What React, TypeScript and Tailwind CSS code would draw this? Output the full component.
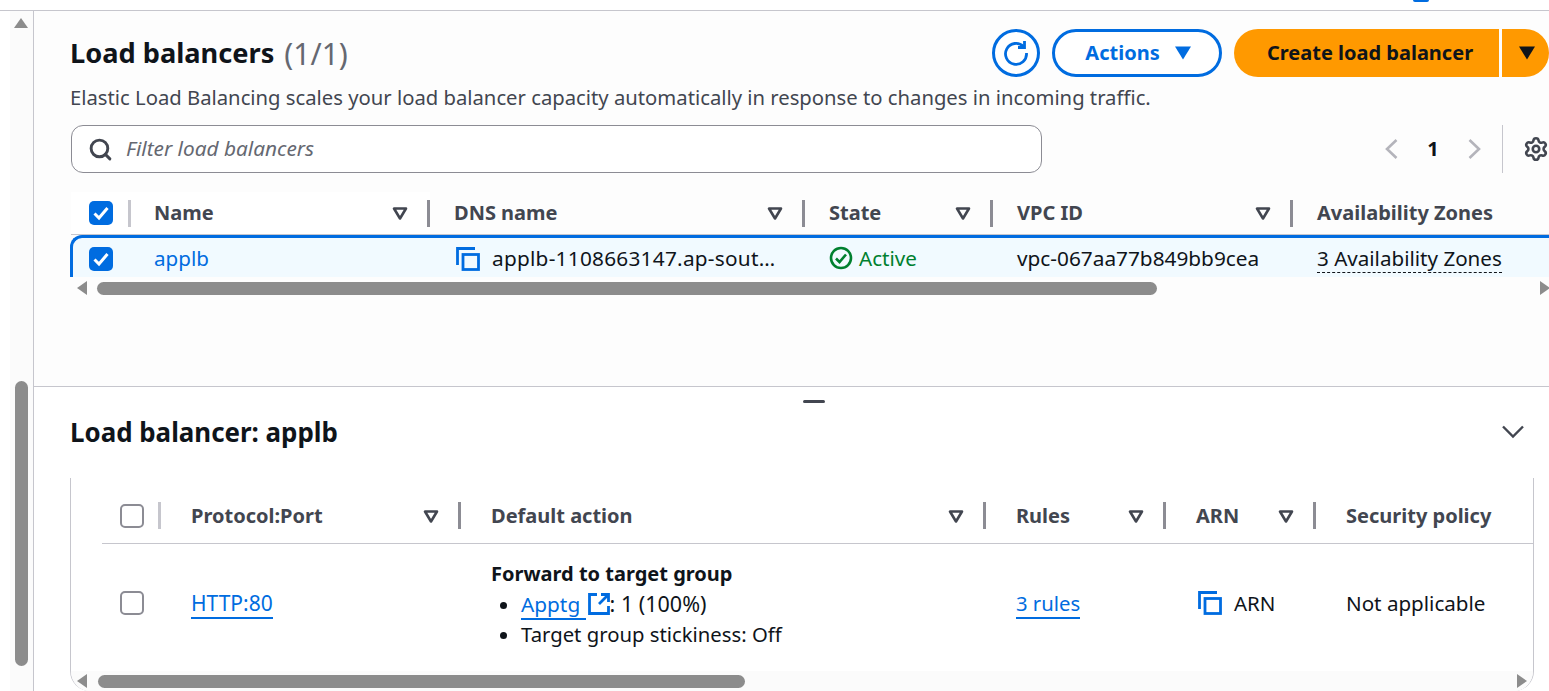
import { Settings, Search } from "lucide-react";

type Col = { label: string; width: string; sortable?: boolean };

const topCols: Col[] = [
  { label: "Name", width: "w-[299px]", sortable: true },
  { label: "DNS name", width: "w-[375px]", sortable: true },
  { label: "State", width: "w-[188px]", sortable: true },
  { label: "VPC ID", width: "w-[300px]", sortable: true },
  { label: "Availability Zones", width: "w-[240px]" },
];

const listenerCols: Col[] = [
  { label: "Protocol:Port", width: "w-[300px]", sortable: true },
  { label: "Default action", width: "w-[525px]", sortable: true },
  { label: "Rules", width: "w-[180px]", sortable: true },
  { label: "ARN", width: "w-[150px]", sortable: true },
  { label: "Security policy", width: "w-[218px]" },
];

function SortIcon() {
  return (
    <svg width="16" height="16" viewBox="0 0 16 16" className="shrink-0 text-[#424650]">
      <path d="M2 3.5h12L8 13.5z" fill="none" stroke="currentColor" strokeWidth="2.6" strokeLinejoin="round" />
    </svg>
  );
}

function Caret({ className }: { className: string }) {
  return (
    <svg width="16" height="14" viewBox="0 0 16 14" className={className}>
      <path d="M0 .5h16L8 13.5z" fill="currentColor" />
    </svg>
  );
}

function CopyIcon() {
  return (
    <svg width="24" height="24" viewBox="0 0 24 24" className="shrink-0 text-[#006ce0]" fill="none" stroke="currentColor" strokeWidth="2.8">
      <path d="M1.5 18V1.5H19" />
      <rect x="7" y="7.5" width="15.5" height="15" />
    </svg>
  );
}

function RefreshIcon() {
  return (
    <svg width="26" height="26" viewBox="0 0 26 26" fill="none" stroke="currentColor" strokeWidth="2.8" className="text-[#006ce0]">
      <path d="M20.5 6.5A10.5 10.5 0 1 0 23.5 13" />
      <path d="M21.5 1v6.5H15" />
    </svg>
  );
}

function ExternalIcon() {
  return (
    <svg width="22" height="22" viewBox="0 0 22 22" fill="none" stroke="currentColor" strokeWidth="2.8" className="ml-[2px] inline-block shrink-0 align-[-3px] text-[#006ce0]">
      <path d="M9 1.5H1.5v19h19V13" />
      <path d="M13 1.5h7.5V9M20 2l-9 9" />
    </svg>
  );
}

function Pager({ d }: { d: string }) {
  return (
    <svg width="14" height="20" viewBox="0 0 14 20" fill="none" stroke="#b4b4bb" strokeWidth="2.6" className="shrink-0">
      <path d={d} />
    </svg>
  );
}

function Checkbox({ checked }: { checked?: boolean }) {
  if (checked) {
    return (
      <div className="flex h-6 w-6 shrink-0 items-center justify-center rounded-[5px] bg-[#006ce0]">
        <svg width="16" height="16" viewBox="0 0 16 16" fill="none" stroke="white" strokeWidth="3">
          <path d="M1.5 8.5l4.5 4.5 8.5-10" />
        </svg>
      </div>
    );
  }
  return <div className="h-6 w-6 shrink-0 rounded-[5px] border-2 border-[#8c8c94] bg-white" />;
}

function HeaderCell({ col, last, inset }: { col: Col; last?: boolean; inset: string }) {
  return (
    <div className={`flex h-full items-center justify-between ${col.width}`}>
      <span className={`font-bold text-[#424650] ${inset}`}>{col.label}</span>
      {col.sortable && (
        <div className="flex items-center gap-[19px]">
          <SortIcon />
          {!last && <div className="h-[27px] w-[3px] bg-[#8c8c94]" />}
        </div>
      )}
    </div>
  );
}

function HScroll({ thumb, gap, right = "" }: { thumb: string; gap: string; right?: string }) {
  return (
    <div className={`flex h-full w-full items-center justify-between ${right}`}>
      <div className={`ml-[6px] flex items-center ${gap}`}>
        <div className="h-0 w-0 border-y-[7px] border-r-[10px] border-y-transparent border-r-[#8c8c8c]" />
        <div className={`h-[13px] rounded-full bg-[#8c8c8c] ${thumb}`} />
      </div>
      <div className="h-0 w-0 border-y-[7px] border-l-[10px] border-y-transparent border-l-[#8c8c8c]" />
    </div>
  );
}

export default function App() {
  return (
    <div className="flex h-[691px] w-[1549px] flex-col overflow-hidden bg-white font-['Noto_Sans',sans-serif] text-[20px] text-[#0f141a]">
      <div className="flex h-[11px] shrink-0 justify-end border-b border-[#c6c6cd] pr-[120px]">
        <div className="h-[2px] w-[16px] rounded-b-full bg-[#006ce0]" />
      </div>

      <div className="flex min-h-0 flex-1">
        {/* page scrollbar */}
        <div className="ml-[10px] flex w-[24px] shrink-0 flex-col items-center border-r border-[#c6c6cd] bg-[#fbfbfb] pr-[1px]">
          <div className="mt-[7px] h-0 w-0 border-x-[7px] border-b-[10px] border-x-transparent border-b-[#8c8c8c]" />
          <div className="mt-[353px] h-[285px] w-[13px] rounded-full bg-[#8c8c8c]" />
        </div>

        <div className="flex min-w-0 flex-1 flex-col">
          {/* list panel */}
          <section className="h-[376px] shrink-0 border-b border-[#c6c6cd] bg-[#fdfdfd] pl-[37px]">
            <div className="flex h-[66px] items-end justify-between">
              <h1 className="-ml-px flex h-[48px] items-center gap-[10px] text-[27.2px] font-bold whitespace-nowrap">
                Load balancers <span className="text-[30px] font-normal text-[#656871]">(1/1)</span>
              </h1>
              <div className="flex h-[48px] shrink-0 items-center gap-[12px]">
                <button className="flex h-[48px] w-[48px] items-center justify-center rounded-full border-[3px] border-[#006ce0] bg-white">
                  <RefreshIcon />
                </button>
                <button className="flex h-[48px] w-[170px] items-center justify-center gap-[15px] rounded-full border-[3px] border-[#006ce0] bg-white pl-[2px] font-bold text-[#006ce0]">
                  Actions
                  <Caret className="text-[#006ce0]" />
                </button>
                <div className="flex h-[48px] w-[315px] gap-[3px]">
                  <button className="flex w-[265px] items-center justify-center rounded-l-full bg-[#ff9900] pl-[7px] font-bold whitespace-nowrap">
                    Create load balancer
                  </button>
                  <button className="flex flex-1 items-center justify-center rounded-r-full bg-[#ff9900] pl-[3px]">
                    <Caret className="text-[#0f141a]" />
                  </button>
                </div>
              </div>
            </div>

            <p className="mt-[6px] -ml-px h-[28px] text-[20.25px] leading-[28px] whitespace-nowrap text-[#424650]">
              Elastic Load Balancing scales your load balancer capacity automatically in response to changes in incoming traffic.
            </p>

            <div className="mt-[14px] flex h-[48px] items-center">
              <div className="flex h-[48px] w-[971px] shrink-0 items-center gap-[13px] rounded-[12px] border border-[#8c8c94] bg-white pl-[16px]">
                <Search size={25} strokeWidth={2.8} className="text-[#424650]" />
                <span className="text-[20.8px] text-[#656871] italic">Filter load balancers</span>
              </div>
              <div className="ml-[342px] flex w-[98px] shrink-0 items-center justify-between">
                <Pager d="M12.5 1 3 10l9.5 9" />
                <span className="font-bold">1</span>
                <Pager d="M1.5 1 11 10l-9.5 9" />
              </div>
              <div className="ml-[20px] h-[48px] w-px shrink-0 bg-[#c6c6cd]" />
              <Settings size={26} strokeWidth={2.4} className="ml-[20px] shrink-0 text-[#424650]" />
            </div>

            <div className="mt-[19px] flex h-[43px] w-[1480px] items-center border-b border-[#c6c6cd]">
              <div className="flex h-full w-[60px] shrink-0 items-center justify-between bg-white pl-[18px]">
                <Checkbox checked />
                <div className="h-[27px] w-[3px] bg-[#c6c6cd]" />
              </div>
              {topCols.map((col, i) => (
                <div key={col.label} className={i === 0 ? "h-full bg-white" : "h-full"}>
                  <HeaderCell col={col} last={i === topCols.length - 1} inset={i === 0 ? "pl-[23px]" : "pl-[24px]"} />
                </div>
              ))}
            </div>

            <div className="-ml-px flex h-[42px] w-[1481px] items-center rounded-tl-[12px] border-t-[3px] border-l-[3px] border-[#006ce0] bg-[#f1faff] pt-[2px] text-[20.6px]">
              <div className="w-[57px] shrink-0 pl-[16px]">
                <Checkbox checked />
              </div>
              <div className="w-[299px] pl-[24px] text-[#006ce0]">applb</div>
              <div className="flex w-[375px] items-center gap-[12px] pl-[27px]">
                <CopyIcon />
                <span className="text-[20.8px] tracking-[0.25px] whitespace-nowrap">applb-1108663147.ap-sout…</span>
              </div>
              <div className="flex w-[188px] items-center gap-[6px] pl-[25px] text-[#00802f]">
                <svg width="24" height="24" viewBox="0 0 24 24" fill="none" stroke="currentColor" strokeWidth="2.6" className="shrink-0">
                  <circle cx="12" cy="12" r="10" />
                  <path d="M7 12.5l3.5 3.5 6.5-7.5" />
                </svg>
                Active
              </div>
              <div className="w-[300px] pl-[25px] text-[20.8px] whitespace-nowrap">vpc-067aa77b849bb9cea</div>
              <div className="pl-[25px]">
                <span className="border-b border-dashed border-[#0f141a] whitespace-nowrap">3 Availability Zones</span>
              </div>
            </div>

            <div className="h-[22px] w-[1479px]">
              <HScroll thumb="w-[1060px]" gap="gap-[10px]" />
            </div>
          </section>

          {/* detail panel */}
          <section className="flex min-h-0 flex-1 flex-col bg-white pl-[36px]">
            <div className="mt-[13px] flex justify-center">
              <div className="ml-[9px] h-[3px] w-[22px] rounded-full bg-[#424650]" />
            </div>
            <div className="mt-[10px] flex h-[38px] w-[1463px] items-center justify-between">
              <h2 className="text-[25.9px] font-bold">Load balancer: applb</h2>
              <svg width="22" height="14" viewBox="0 0 22 14" fill="none" stroke="#424650" strokeWidth="2.4" className="mr-[9px]">
                <path d="M1 1.5l10 10 10-10" />
              </svg>
            </div>

            <div className="mt-[27px] flex min-h-0 w-[1464px] flex-1 flex-col rounded-b-[20px] border-x border-[#c6c6cd]">
              <div className="mt-[13px] ml-[31px] flex h-[53px] shrink-0 items-center border-b border-[#c6c6cd]">
                <div className="flex h-full w-[59px] shrink-0 items-center justify-between pb-[3px] pl-[18px]">
                  <Checkbox />
                  <div className="h-[27px] w-[3px] bg-[#c6c6cd]" />
                </div>
                {listenerCols.map((col, i) => (
                  <div key={col.label} className="h-full pb-[3px]">
                    <HeaderCell col={col} last={i === listenerCols.length - 1} inset="pl-[30px]" />
                  </div>
                ))}
              </div>

              <div className="ml-[31px] flex h-[127px] shrink-0 items-center pb-[9px]">
                <div className="w-[58px] shrink-0 pl-[18px]">
                  <Checkbox />
                </div>
                <div className="w-[300px] pt-[2px] pl-[31px] text-[21px]">
                  <span className="border-b-2 border-[#006ce0] text-[#006ce0]">HTTP:80</span>
                </div>
                <div className="w-[525px] pt-[1px] pl-[31px] leading-[30px]">
                  <div className="font-bold">Forward to target group</div>
                  <ul className="list-disc pl-[30px] text-[20.3px]">
                    <li className="h-[30px]">
                      <span className="border-b-2 border-[#006ce0] text-[20.8px] text-[#006ce0]">Apptg </span>
                      <ExternalIcon />
                      <span className="text-[21.5px]">: 1 (100%)</span>
                    </li>
                    <li>Target group stickiness: Off</li>
                  </ul>
                </div>
                <div className="w-[180px] pl-[31px] text-[20.3px]">
                  <span className="border-b-2 border-[#006ce0] text-[#006ce0]">3 rules</span>
                </div>
                <div className="flex w-[150px] items-center gap-[12px] pl-[33px] text-[20.5px]">
                  <CopyIcon />
                  ARN
                </div>
                <div className="pl-[31px] text-[20.6px] whitespace-nowrap">Not applicable</div>
              </div>

              <div className="min-h-0 flex-1 rounded-b-[20px] bg-[#fbfbfb]">
                <HScroll thumb="w-[647px]" gap="gap-[11px]" right="pr-[6px]" />
              </div>
            </div>
          </section>
        </div>
      </div>
    </div>
  );
}
